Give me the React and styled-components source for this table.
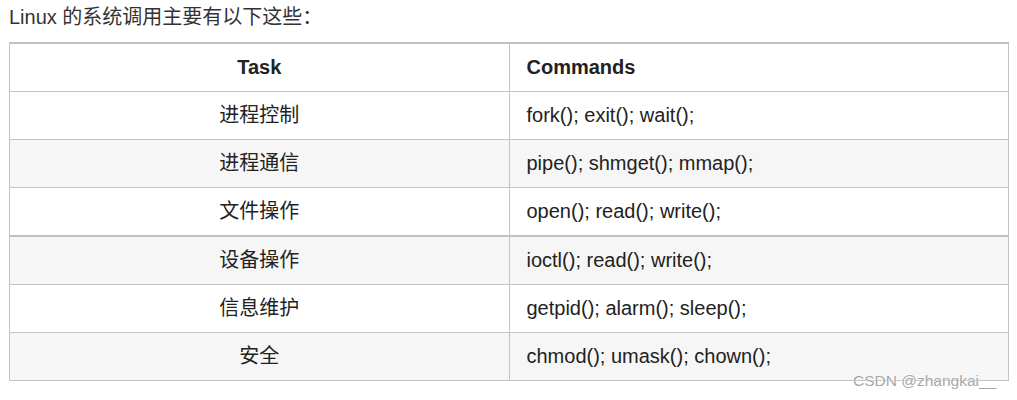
import React from 'react';
import styled, { createGlobalStyle } from 'styled-components';

const GlobalStyle = createGlobalStyle`
  body {
    margin: 0;
    background: #fff;
    font-family: "Liberation Sans", Arial, "Noto Sans CJK SC", sans-serif;
  }
`;

const Page = styled.div`
  position: relative;
  box-sizing: border-box;
  min-height: 400px;
  padding: 2px 8px 0 9px;
  color: #222;
`;

const Intro = styled.p`
  margin: 0 0 10px;
  font-size: 20px;
  line-height: 30px;
  color: #333;
`;

const Table = styled.table`
  width: 1000px;
  border-collapse: collapse;
  border-top: 2px solid #c0c0c0;
  table-layout: fixed;
  font-size: 20px;
`;

const Row = styled.tr`
  background: ${(p) => (p.$striped ? '#f6f6f6' : '#fff')};
  border-top: ${(p) => (p.$thick ? '2px solid #c0c0c0' : '1px solid #c4c4c4')};
`;

const Cell = styled.td`
  border: 1px solid #c4c4c4;
  padding: 9px 17px;
  line-height: 29px;
  height: 29px;
  text-align: ${(p) => (p.$center ? 'center' : 'left')};
  font-weight: ${(p) => (p.$head ? 700 : 400)};
  white-space: nowrap;
`;

const Watermark = styled.div`
  position: absolute;
  left: 853px;
  top: 371px;
  font-size: 15.5px;
  line-height: 20px;
  color: #a8a8a8;
  text-shadow: 0 0 2px #fff, 0 0 2px #fff;
`;

const rows = [
  ['进程控制', 'fork(); exit(); wait();'],
  ['进程通信', 'pipe(); shmget(); mmap();'],
  ['文件操作', 'open(); read(); write();'],
  ['设备操作', 'ioctl(); read(); write();'],
  ['信息维护', 'getpid(); alarm(); sleep();'],
  ['安全', 'chmod(); umask(); chown();'],
];

const App = () => (
  <>
    <GlobalStyle />
    <Page>
      <Intro>Linux 的系统调用主要有以下这些：</Intro>
      <Table>
        <tbody>
          <Row>
            <Cell $head $center>Task</Cell>
            <Cell $head>Commands</Cell>
          </Row>
          {rows.map(([task, cmds], i) => (
            <Row key={task} $striped={i % 2 === 1} $thick={i === 3}>
              <Cell $center>{task}</Cell>
              <Cell>{cmds}</Cell>
            </Row>
          ))}
        </tbody>
      </Table>
      <Watermark>CSDN @zhangkai__</Watermark>
    </Page>
  </>
);

export default App;
